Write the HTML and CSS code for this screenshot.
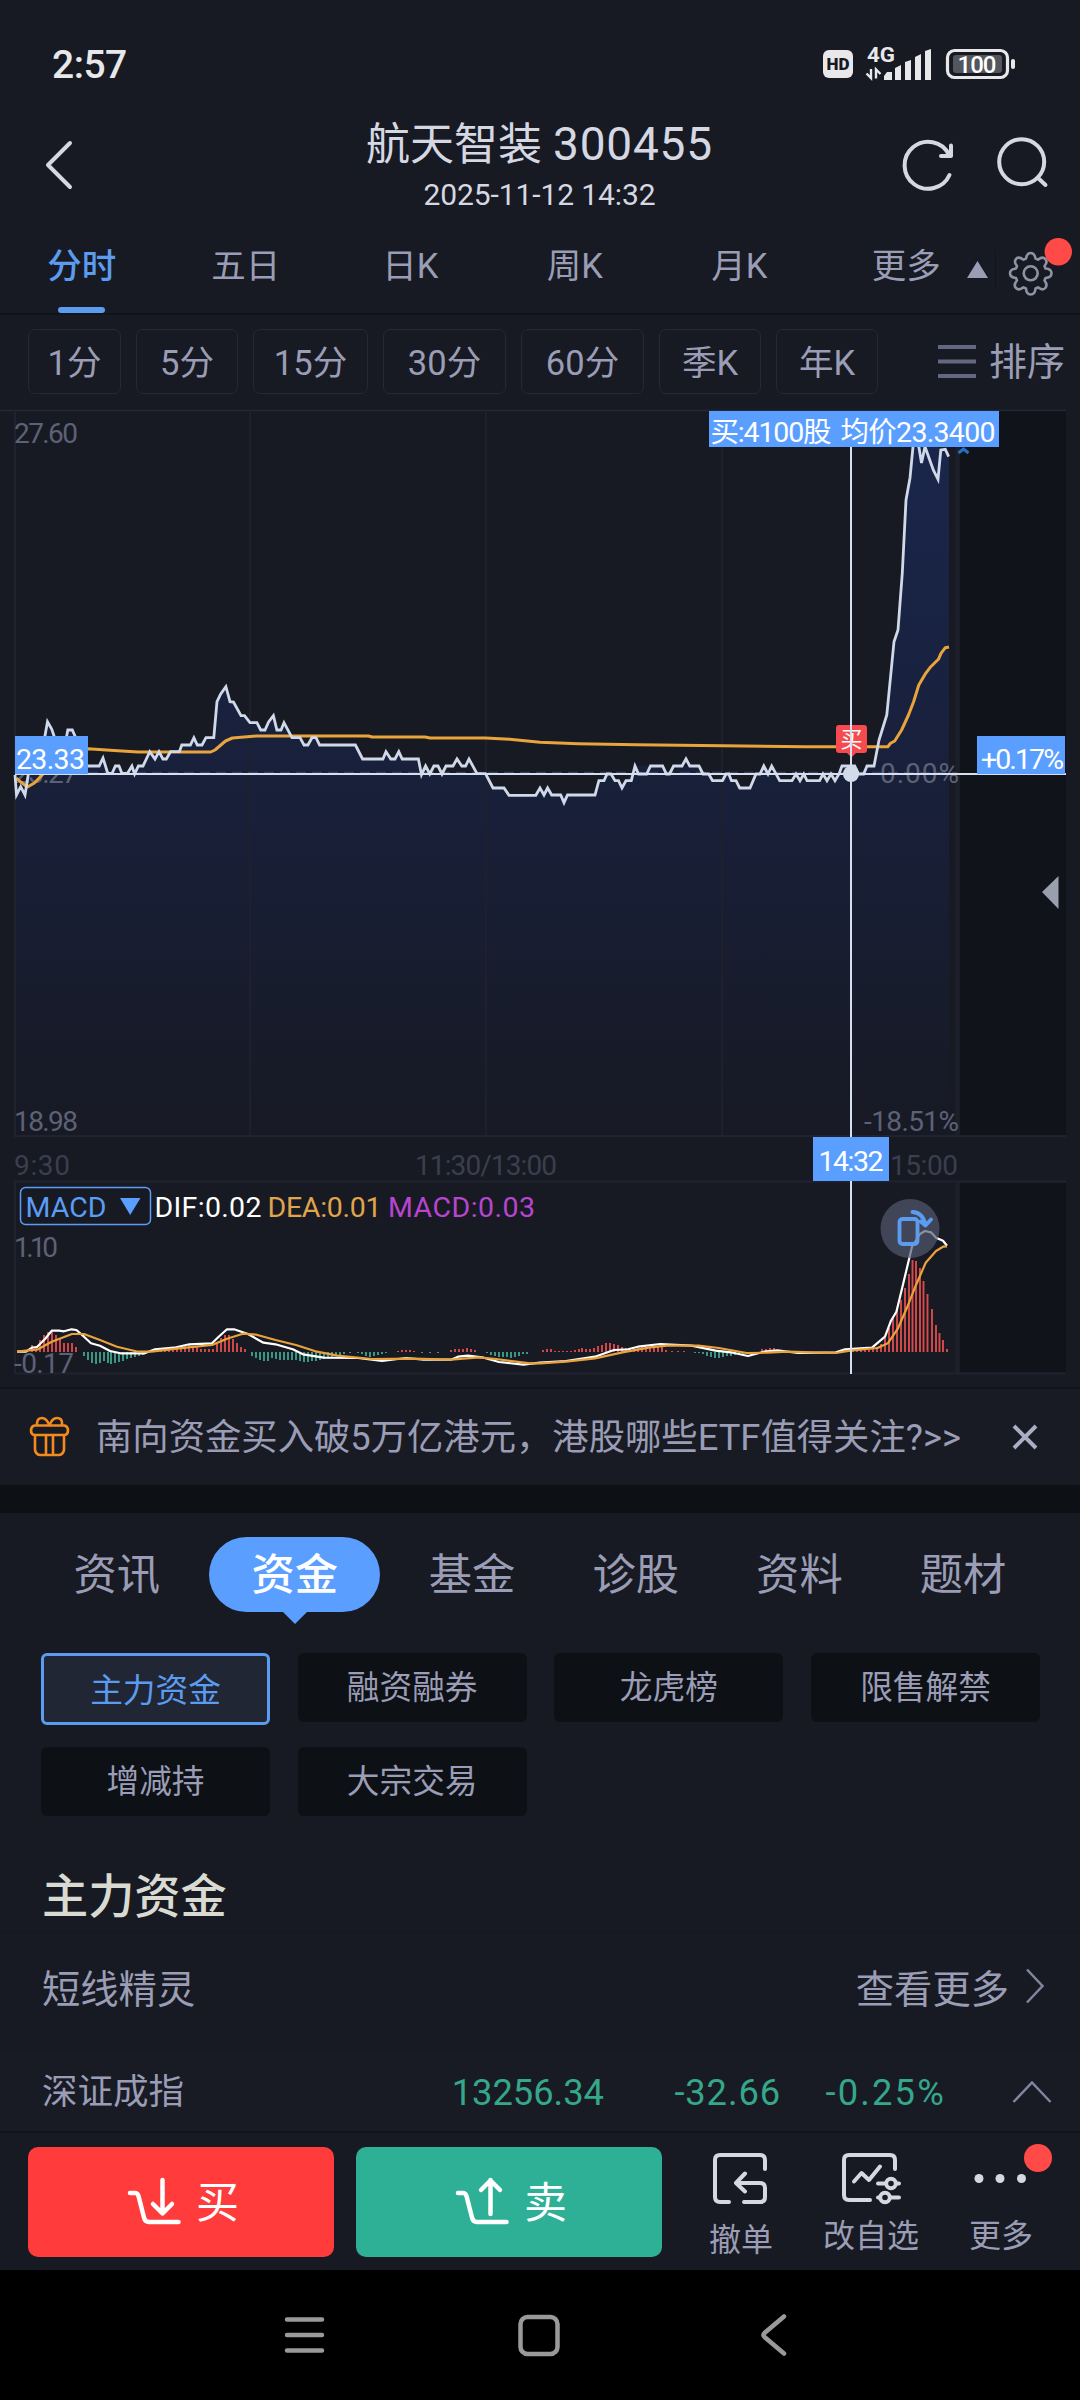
FILE: index.html
```html
<!DOCTYPE html>
<html lang="zh-CN">
<head>
<meta charset="utf-8">
<title>航天智装 300455</title>
<link rel="stylesheet" href="styles.css">
</head>
<body>
<div class="phone">
  <div class="status">
    <span class="clock">2:57</span>
    <svg class="status-icons" viewBox="820 40 200 48">
      <rect x="823" y="50" width="30" height="28" rx="6" fill="#e8e8ea"/>
      <text x="826.5" y="70" class="hd" textLength="23" lengthAdjust="spacingAndGlyphs">HD</text>
      <text x="867" y="62" class="net" textLength="28" lengthAdjust="spacingAndGlyphs">4G</text>
      <path d="M871 69v9l-4.500-4.500M876 78.500V69.500l4.500 4.500" fill="none" stroke="#e8e8ea" stroke-width="2.400"/>
      <path d="M884 80v-4l3-4h5v8zM895 80V68l6-3v15zM905 80V62l6-2v20zM915 80V57l6-3v26zM925 80V51l6-2v31z" fill="#e8e8ea"/>
      <rect x="947.500" y="50.500" width="60" height="27" rx="7" fill="none" stroke="#e8e8ea" stroke-width="3.200"/>
      <rect x="953" y="55" width="49" height="18" rx="3" fill="#53565d"/>
      <rect x="1011" y="59" width="4" height="10" rx="2" fill="#e8e8ea"/>
      <text x="957.500" y="73" class="batt" textLength="39">100</text>
    </svg>
  </div>

  <header class="header">
    <svg class="back" viewBox="40 135 40 60"><path d="M71 143L49 165L71 187"/></svg>
    <div class="title">
      <h1>航天智装 <b>300455</b></h1>
      <p>2025-11-12 14:32</p>
    </div>
    <svg class="header-icons" viewBox="895 130 160 70">
      <path d="M949.500 175A23.500 23.500 0 1 1 949 154.500M951 145.500V156H941"/>
      <circle cx="1021.700" cy="161.700" r="22.500"/><path d="M1037.500 177.500L1045.500 185"/>
    </svg>
  </header>

  <nav class="periods">
    <span class="on">分时</span><span>五日</span><span>日K</span><span>周K</span><span>月K</span><span class="more">更多</span>
    <svg class="gear" viewBox="960 230 120 70">
      <path d="M967 278L977.500 261L988 278Z" fill="#9a9db5"/>
      <path d="M995.500 250v38" stroke="#12141a" stroke-width="1"/>
      <g fill="none" stroke="#8d92a4" stroke-width="2.600" stroke-linejoin="round">
        <path d="M1026 258.500Q1027 253 1030.700 253T1035.500 258.500L1038 259.700Q1042.500 256 1045.300 259T1044.500 266L1045.500 268.500Q1051.500 269 1051.500 273.300T1045.500 278L1044.500 280.500Q1048 285 1045.300 288T1038 287.300L1035.500 288.500Q1035 294.500 1030.700 294.500T1026 288.500L1023.500 287.300Q1019 291 1016 288T1017 280.500L1016 278Q1010 277.500 1010 273.300T1016 268.500L1017 266Q1013.500 262 1016 259T1023.500 259.700Z"/>
        <circle cx="1030.700" cy="273.300" r="7"/>
      </g>
      <circle cx="1058.300" cy="251.700" r="13.700" fill="#ff4a48"/>
    </svg>
  </nav>

  <div class="minutes">
    <span class="chip c1">1分</span><span class="chip c2">5分</span><span class="chip c3">15分</span><span class="chip c4">30分</span><span class="chip c4">60分</span><span class="chip c2">季K</span><span class="chip c2">年K</span>
    <span class="sort"><svg viewBox="0 0 38 34"><path d="M0 3h38M0 17.500h38M0 32h38" stroke="#63677f" stroke-width="4"/></svg>排序</span>
  </div>

  <svg class="chart" viewBox="0 405 1080 982">
    <defs>
      <linearGradient id="area" gradientUnits="userSpaceOnUse" x1="0" y1="430" x2="0" y2="1135">
        <stop offset="0" stop-color="#1a264c"/><stop offset=".55" stop-color="#181f38"/><stop offset="1" stop-color="#171a24"/>
      </linearGradient>
    </defs>
    <rect x="960" y="411" width="106" height="724" fill="#10131a"/>
    <rect x="960" y="1183" width="106" height="189" fill="#10131a"/>
    <path fill="url(#area)" d="M15 1135V775L16.500 795L20.700 787L25 795L29 770L44.800 737L47.500 722L51.700 729L54.400 737L60 752L66.500 737L67.800 730H72.300L75.400 737L84 766H99.200L103 758L107.800 774H112L115.400 766H119L122 774H127.400L131.900 766L134.600 774L138.400 766H143L149.800 752L155 759L159 752L162.900 759H166.300L170.500 752H179.400L181.800 745H190.400L193.900 738L197.300 745H202L206 738H213.800L217 702L220.700 694L225.900 687L230 702H233.500L241 716H244.500L250 723H256.900L260.700 730H265L268.600 722L273.400 716L276.900 730H281L284 723L292 738H300L304 745H307.900L312 738H316L319.600 745H355.400L362.600 759H382.900L386 752L390.800 759H395L398.800 752L402.200 759H418.400L421.500 774L477 774H485.500L493 788H504L509 795H535.800L540 788L544 795L547.600 788L551.700 795H595L598.900 781L607 774L622 788L635 766L650 766H662L669 774L682 766L699 766L712 781L728 774L739 788H750L764 766L780 781H835L842 766H854L858 774L867 766H874L879 740L886.800 715L894 642L898 630L902.300 573L906 500L910 478L913 447L919 430L940 449L949 457V1135Z"/>
    <g fill="none" stroke="#20232f" stroke-width="2">
      <path d="M0 410.500H1066" stroke="#242734" stroke-width="1.500"/>
      <path d="M15 412V1136H1066M15 1374V1181.500H1066M15 1373.500H1066"/>
      <path d="M250 412V1135M486 412V1135M722 412V1135" stroke="#1e212d"/>
      <path d="M957.500 412V1136M957.500 1182V1373" stroke-width="4" stroke="#1d202a"/>
    </g>
    <path d="M88 772.500H957" stroke="#33405c" stroke-width="1.500" stroke-dasharray="10 6" fill="none"/>

    <g class="axis">
      <text x="14" y="443" textLength="64">27.60</text>
      <text x="14" y="783" textLength="64">23.27</text>
      <text x="14" y="1131" textLength="64">18.98</text>
      <text x="880" y="783" textLength="79">0.00%</text>
      <text x="864" y="1131" textLength="95">-18.51%</text>
      <text x="14" y="1257" textLength="44">1.10</text>
      <text x="14" y="1373" textLength="60">-0.17</text>
    </g>
    <g class="axis dim">
      <text x="14" y="1175" textLength="56">9:30</text>
      <text x="415" y="1175" textLength="142">11:30/13:00</text>
      <text x="890" y="1175" textLength="68">15:00</text>
    </g>

    <path class="avg" d="M16.500 778L20.700 782L27.500 787L34.400 783L43 774L55 750L88 748.700L110 750.300L138 752H210.700L215 750L225.500 741L232.400 738L256.500 736H368.500L372 737H425L430 738H485.500L509.600 739.300L540 742.300L578 743.700L637 744.700L722.500 745.700L805 746.700H887.800L890.500 743.300L894.700 741L901.600 730L908.500 715L913.600 701.700L918.800 685L925.700 673.300L930.800 666.700L938.400 659.300L941 653.300L945.300 647.700L949 647"/>
    <path class="price" d="M15 775L16.500 795L20.700 786.700L25 795L29 770L44.800 736.700L47.500 721.700L51.700 729L54.400 737L60 752L66.500 737L67.800 730H72.300L75.400 737L84 766H99.200L103 758L107.800 773.500H112L115.400 766H119L122 773.500H127.400L131.900 766L134.600 774L138.400 766H143L149.800 751.700L155 759L159 751.700L162.900 759H166.300L170.500 751.700H179.400L181.800 745H190.400L193.900 737.700L197.300 745H202L206 737.700H213.800L217 701.700L220.700 694L225.900 686.700L230 701.700L233.500 702L241 715.700H244.500L250 722.700H256.900L260.700 730H265L268.600 722L273.400 715.700L276.900 730H281L284 722.700L292 737.700H300L304 745H307.900L312 737.700H316L319.600 745H355.400L362.600 759H382.900L386 751.700L390.800 759H395L398.800 751.700L402.200 759H418.400L421.500 774.700L425.600 766L429.800 774L433.900 766H438L442 774L446 766H453L457 759L461.800 766H465.600L469 759L477 773.700H485.500L493 788H504L509 795.300H535.800L540 788L544 795L547.600 788L551.700 795H560.700L564 802.700L567.500 795H595L598.900 780.700H604L607 774H611L615 780.700H618.500L622 788L626 780.700H631.300L635 766L638.500 774H646.700L650.500 766H662.600L666.400 774H669.500L673.600 766H682L686 759L689.800 766H699L703 774H708.700L712.500 780.700H722.500L726 774H728.700L731.500 780.700H736L739.700 788H750L756 774H760L763.800 766L768 774L771.700 766L779.700 780.700H792L796 774L800 780.700L803.800 774L807 780.700H819.600L823 774L827 780.700L831 774L835 780.700L839 774L842 766H854.700L858.500 774H863.700L867 766H874L879 740L886.800 715L894 641.700L898 630L902.300 573L906 500L910 478L913 446.700L914 433L919 447.700L921.500 463L925 446.700L933.300 470L938 479.300L940.800 450L945.300 449.300L948.700 456.700"/>
    <path d="M958.500 453L963.500 449L968.500 453" fill="none" stroke="#2272c8" stroke-width="3"/>

    <g fill="none" stroke-width="1.900">
      <path stroke="#d84b4a" d="M32 1352v-7M36 1352v-6M40 1352v-12M44 1352v-17M48 1352v-20M52 1352v-20M56 1352v-17M60 1352v-14M64 1352v-9M68 1352v-9M72 1352v-9M76 1352v-5M153 1352v-1M157 1352v-2M161 1352v-2M165 1352v-3M169 1352v-3M173 1352v-4M177 1352v-5M181 1352v-6M185 1352v-7M189 1352v-7M193 1352v-6M197 1352v-5M201 1352v-3M205 1352v-3M209 1352v-3M213 1352v-3M217 1352v-9M221 1352v-14M225 1352v-17M229 1352v-17M233 1352v-13M237 1352v-9M241 1352v-5M245 1352v-3M398 1352v-1M402 1352v-2M406 1352v-2M410 1352v-2M414 1352v-1M451 1352v-2M455 1352v-3M459 1352v-3M463 1352v-3M467 1352v-4M471 1352v-3M475 1352v-2M543 1352v-2M547 1352v-3M551 1352v-3M555 1352v-1M559 1352v-1M563 1352v-1M567 1352v-1M571 1352v-1M575 1352v-2M579 1352v-3M582 1352v-4M586 1352v-3M590 1352v-3M594 1352v-4M598 1352v-6M602 1352v-7M606 1352v-9M610 1352v-9M614 1352v-8M618 1352v-7M622 1352v-5M626 1352v-4M630 1352v-3M634 1352v-3M638 1352v-4M642 1352v-5M646 1352v-5M650 1352v-6M654 1352v-6M658 1352v-6M662 1352v-5M666 1352v-2M672 1352v-1M678 1352v-1M684 1352v-1M762 1352v-3M766 1352v-3M770 1352v-4M774 1352v-4M778 1352v-2M845 1352v-3M849 1352v-3M853 1352v-2M857 1352v-2M861 1352v-2M865 1352v-2M869 1352v-2M873 1352v-3M877 1352v-5M881 1352v-8M885 1352v-14M889 1352v-24M893 1352v-35M897 1352v-43M901 1352v-52M905 1352v-64M909 1352v-78M912.500 1352v-92M916 1352v-91M920 1352v-84M923.500 1352v-71M927.500 1352v-58M932 1352v-43M936 1352v-27M939.500 1352v-19M943 1352v-12M947 1352v-3"/>
      <path stroke="#3c9d87" d="M84 1352v4M88 1352v8M92 1352v11M96 1352v12M100 1352v11M104 1352v9M108 1352v11M111 1352v12M115 1352v11M119 1352v10M123 1352v9M127 1352v7M131 1352v6M135 1352v5M139 1352v4M143 1352v3M252 1352v4M256 1352v6M260 1352v8M264 1352v9M268 1352v9M272 1352v6M276 1352v7M280 1352v8M284 1352v8M288 1352v8M292 1352v8M296 1352v8M300 1352v9M304 1352v10M308 1352v10M312 1352v9M316 1352v9M320 1352v8M324 1352v7M328 1352v6M332 1352v5M336 1352v4M340 1352v3M344 1352v2M350 1352v1M358 1352v1M362 1352v2M366 1352v4M370 1352v5M374 1352v4M378 1352v3M382 1352v2M386 1352v1M422 1352v1M430 1352v1M438 1352v1M487 1352v1M491 1352v3M495 1352v4M499 1352v5M503 1352v5M507 1352v5M511 1352v6M515 1352v5M519 1352v4M523 1352v2M527 1352v2M695 1352v1M699 1352v1M703 1352v2M707 1352v4M711 1352v5M715 1352v6M719 1352v6M723 1352v5M727 1352v4M731 1352v4M735 1352v3M739 1352v3M743 1352v3M747 1352v2M751 1352v1"/>
    </g>
    <path class="macd" stroke="#fff" d="M17 1351.700H26L32 1347.700L37 1347L45 1339L51.700 1330.700H59L64 1331.300L71.600 1329.300L76.400 1330L84 1336.700L91 1343.300L100 1345.700L110 1351L120.500 1353.300H144.600L155 1349.300L174 1347.700L189.400 1344.300L212 1343.300L218.700 1336.700L227 1329.300H234L248 1334L263.400 1342.700L275.500 1344.300L292.700 1349.300L303 1354.300L323.700 1357.700L358 1358L382 1361L406 1358L423.600 1359.700H451L458 1356.700L468 1355.700L482 1357.300L499 1362L523.400 1364.700L540 1362.700L566 1361L595 1356.700L614 1350L628 1349.300L638 1346.700L660.500 1344L691.500 1345.700L715.600 1350.700L733 1352.700L748 1356L764 1351.700L777.600 1350.300L798 1353L836 1352.300L845 1349.300L872 1347.700L885 1336.700L891 1320.700L896.400 1311.700L903.300 1283.300L912 1246.700L920 1234L925 1231L931 1232.300L936 1237.700L943 1240.700L947 1245.700"/>
    <path class="macd" stroke="#e9a23c" d="M17 1351.700L38 1349.300L51.700 1341.700L72 1334H84L100 1340L117 1346.700L138 1351.700H151.500L179 1348.300L212 1345L227 1338.700L243 1333.700L256.500 1334.700L275.500 1340L296 1345L317 1351.700L337.500 1355.700L372 1359L413 1358.700L451 1359.700L478.700 1357.300L496 1359L530 1363.300H540L566 1361.700L595 1358.300L622.600 1352.300L650 1347.300L667 1345.700H698.400L719 1348L746.600 1353L767 1352.700L788 1351.700L836 1353L850 1350.700L877.500 1348L887.800 1343.300L898 1328.300L906.700 1308.300L915.300 1286.700L925.700 1262.700L936 1251L943 1246.700L947 1246.300"/>

    <rect x="20.500" y="1187.500" width="130" height="37" rx="5" fill="none" stroke="#5b9cf5" stroke-width="1.500"/>
    <path d="M120 1198H140.500L130.200 1215Z" fill="#5a9eff"/>
    <g class="legend">
      <text x="25.500" y="1216.500" textLength="81" fill="#5b9cf5">MACD</text>
      <text x="154.500" y="1216.500" textLength="107" fill="#fff">DIF:0.02</text>
      <text x="267.500" y="1216.500" textLength="114" fill="#e0a44a">DEA:0.01</text>
      <text x="388" y="1216.500" textLength="147" fill="#b845cf">MACD:0.03</text>
    </g>

    <rect x="836" y="725" width="31" height="28" rx="3" fill="#f64b4e"/>
    <path d="M846 752L851.500 757.500L857 752Z" fill="#f64b4e"/>
    <text x="840.500" y="747" class="mark">买</text>
    <path d="M15 774H1066M851 447V1138M851 1181V1374" stroke="#d6dff0" stroke-width="2" fill="none"/>
    <circle cx="851" cy="774" r="8" fill="#d2dbea"/>
    <g fill="#5a9eff">
      <rect x="15" y="736" width="73" height="38"/>
      <rect x="709" y="411" width="290" height="36"/>
      <rect x="977" y="736" width="88" height="38"/>
      <rect x="813" y="1137" width="76" height="44"/>
    </g>
    <g class="flag">
      <text x="16" y="769" textLength="69">23.33</text>
      <text x="710.500" y="442" textLength="121">买:4100股</text>
      <text x="840.500" y="442" textLength="155">均价23.3400</text>
      <text x="981" y="769" textLength="83">+0.17%</text>
      <text x="818.500" y="1171" textLength="65">14:32</text>
    </g>
    <circle cx="910" cy="1228.600" r="29.500" fill="#555a72" fill-opacity=".68"/>
    <g fill="none" stroke="#5b9cf0" stroke-width="3.800" stroke-linecap="round" stroke-linejoin="round">
      <rect x="899.500" y="1219" width="18" height="25" rx="3"/>
      <path d="M912.500 1212Q923 1212.500 925.500 1225M920.500 1221.500L925.500 1225.500L931 1219.500"/>
    </g>
    <path d="M1042 892L1058.500 876V909Z" fill="#9a9fae"/>
  </svg>

  <div class="notice">
    <svg class="gift" viewBox="28 1414 44 44"><path d="M37 1425.500V1423Q37.500 1418 42 1418T49.500 1425.500Q52 1418 57 1418T62 1423V1425.500M34.500 1425.500H64.500Q68 1426.500 68 1430.500T64.500 1435H34.500Q31 1434.500 31 1430.500T34.500 1425.500ZM35 1435V1449.500Q35.500 1454.500 40 1455H59Q63.500 1454.500 64 1449.500V1435M46 1436V1454M53 1436V1454"/></svg>
    <p>南向资金买入破5万亿港元，港股哪些ETF值得关注?&gt;&gt;</p>
    <svg class="close" viewBox="0 0 26 26"><path d="M2 2L24 24M24 2L2 24"/></svg>
  </div>
  <div class="band"></div>

  <nav class="sections">
    <span>资讯</span><span class="on">资金</span><span>基金</span><span>诊股</span><span>资料</span><span>题材</span>
  </nav>
  <div class="topics">
    <span class="on">主力资金</span><span>融资融券</span><span>龙虎榜</span><span>限售解禁</span><span>增减持</span><span>大宗交易</span>
  </div>
  <h2>主力资金</h2>
  <div class="row"><span>短线精灵</span><span class="link">查看更多<svg viewBox="0 0 20 36"><path d="M2 1.500L17.500 18L2 34.500"/></svg></span></div>
  <div class="index">
    <span class="name">深证成指</span><b class="v1">13256.34</b><b class="v2">-32.66</b><b class="v3">-0.25%</b>
    <svg viewBox="0 0 40 24"><path d="M1.500 22L20 2.500L38.500 22"/></svg>
  </div>

  <footer class="trade">
    <div class="btn buy"><svg viewBox="0 0 56 50"><path d="M3 17H8Q10.500 17 11.500 20L17 41.500Q18 46 22 46H51.500M35.500 4V37M26 28L35.500 37.500L45 28"/></svg><span>买</span></div>
    <div class="btn sell"><svg viewBox="0 0 56 50"><path d="M3 17H8Q10.500 17 11.500 20L17 41.500Q18 46 22 46H51.500M35.500 38V4M26 14L35.500 4.500L45 14"/></svg><span>卖</span></div>
    <div class="tool t1"><svg viewBox="712 2150 60 56"><path d="M766 2169V2160Q766 2155 761 2155H721Q716 2155 716 2160V2197Q716 2202 721 2202H730M745 2202H761Q766 2202 766 2197V2188Q766 2183 761 2183H737M746 2173.500L737 2183L746 2191.500"/></svg><span>撤单</span></div>
    <div class="tool t2"><svg viewBox="840 2150 62 56"><path d="M895 2169V2160Q895 2155 890 2155H849Q844 2155 844 2160V2195Q844 2200 849 2200H870M854 2181.500L861.500 2173L869 2180L880 2166.500M878 2183.500H884M897 2183.500H899M878 2197.500H880M891 2197.500H899"/><circle cx="891" cy="2183.500" r="4.800"/><circle cx="885" cy="2197.500" r="4.800"/></svg><span>改自选</span></div>
    <div class="tool t3"><svg viewBox="970 2142 84 64"><g class="dots"><circle cx="979" cy="2178.500" r="4.500"/><circle cx="1000" cy="2178.500" r="4.500"/><circle cx="1021.500" cy="2178.500" r="4.500"/></g><circle class="dot" cx="1038" cy="2158" r="14"/></svg><span>更多</span></div>
  </footer>

  <div class="system">
    <svg viewBox="270 2300 530 70"><path d="M287 2319.600H322M287 2335H322M287 2350.500H322"/><rect x="520.500" y="2317" width="37" height="37" rx="7"/><path d="M784 2316.500L764.500 2333Q762.500 2335 764.500 2337L784 2353.500"/></svg>
  </div>
</div>
</body>
</html>
```
FILE: styles.css
```css
* { box-sizing: border-box; margin: 0; padding: 0; }
body { background: #171a22; }
.phone {
  width: 1080px; height: 2400px; overflow: hidden;
  display: flex; flex-direction: column;
  background: #171a22; color: #9a9db5;
  font-family: Roboto, "Noto Sans CJK SC", sans-serif;
}
svg { display: block; flex: none; }
b { font-weight: 400; }

.status { height: 110px; padding: 8px 60px 0 52px; display: flex; justify-content: space-between; align-items: flex-start; }
.clock { font-size: 39px; font-weight: 500; line-height: 46px; color: #e8e8ea; padding-top: 34px; letter-spacing: -.5px; }
.status-icons { width: 200px; height: 48px; margin-top: 32px; }
.hd { font-size: 17px; font-weight: 900; fill: #171a22; }
.net { font-size: 21px; font-weight: 700; fill: #e8e8ea; }
.batt { font-size: 24px; font-weight: 500; fill: #fff; }

.header { height: 115px; display: flex; padding: 0 25px 0 39px; }
.back { width: 40px; height: 60px; margin-top: 25px; }
.back path { fill: none; stroke: #d5d8e3; stroke-width: 4; stroke-linecap: round; stroke-linejoin: round; }
.title { flex: 1; padding-left: 105px; text-align: center; color: #d5d8e3; }
.title h1 { font-size: 44px; font-weight: 400; line-height: 64px; height: 66px; padding-top: 2px; white-space: nowrap; }
.title h1 b { font-size: 46px; letter-spacing: .8px; }
.title p { font-size: 30px; line-height: 36px; padding-top: 1px; letter-spacing: -.1px; }
.header-icons { width: 160px; height: 70px; margin-top: 20px; }
.header-icons * { fill: none; stroke: #d5d8e3; stroke-width: 4; stroke-linecap: round; stroke-linejoin: round; }

.periods { height: 90px; display: flex; border-bottom: 2px solid #101319; font-size: 34.500px; line-height: 82px; }
.periods span { width: 164.500px; text-align: center; flex: none; }
.periods .on { width: 163.500px; color: #5b9cf0; font-weight: 500; display: flex; flex-direction: column; align-items: center; }
.periods .on::after { content: ""; width: 47px; height: 6px; border-radius: 3px; background: #5b9cf0; }
.periods .more { width: 138.500px; padding-left: 31px; }
.gear { width: 120px; height: 70px; margin-top: 5px; }

.minutes { height: 90px; padding: 14px 15px 11px 28px; display: flex; gap: 15px; font-size: 34.500px; }
.chip { height: 65px; line-height: 66px; border: 1px solid #252836; border-radius: 7px; text-align: center; flex: none; }
.c1 { width: 93px; } .c2 { width: 102px; } .c3 { width: 115px; } .c4 { width: 123px; }
.sort { margin-left: auto; display: flex; align-items: center; gap: 13px; font-size: 38px; line-height: 66px; height: 65px; white-space: nowrap; }
.sort svg { width: 38px; height: 34px; margin-top: -2px; }

.chart { width: 1080px; height: 982px; }
.axis { font-size: 28px; fill: #5d6176; }
.dim { fill: #3b3e4f; }
.legend, .flag { font-size: 28.500px; }
.flag { fill: #fff; }
.mark { font-size: 22px; fill: #fff; }
.avg { fill: none; stroke: #e9a43c; stroke-width: 3; stroke-linejoin: round; }
.price { fill: none; stroke: #d0d9e9; stroke-width: 2.800; stroke-linejoin: miter; }
.macd { fill: none; stroke-width: 2.200; stroke-linejoin: round; }

.notice { height: 98px; border-top: 2px solid #101319; background: #181b24; display: flex; align-items: center; padding: 0 42px 0 28px; font-size: 36.350px; }
.gift { width: 44px; height: 44px; margin-top: -3px; }
.gift path { fill: none; stroke: #f28a1e; stroke-width: 2.600; stroke-linejoin: round; }
.notice p { padding: 0 0 6px 24px; white-space: nowrap; flex: 1; }
.close { width: 26px; height: 26px; }
.close path { stroke: #aaaec4; stroke-width: 4; }
.band { height: 28px; background: #0d1014; }

.sections { height: 140px; padding: 24px 35px 0 35px; display: flex; font-size: 43.300px; line-height: 77px; }
.sections span { width: 163.700px; text-align: center; flex: none; }
.sections .on { width: 171px; margin: 0 10px 0 10.500px; height: 75px; border-radius: 38px; background: #5a9eff; color: #fff; font-weight: 500; display: flex; flex-direction: column; align-items: center; }
.sections .on::after { content: ""; border: 12px solid transparent; border-bottom: 0; border-top: 12px solid #5a9eff; margin-top: -2px; }
.topics { height: 187px; padding: 0 40px 0 41px; display: grid; grid-template-columns: repeat(4, 229px); grid-template-rows: 69px 69px; column-gap: 27.700px; row-gap: 25px; font-size: 32.700px; line-height: 71px; }
.topics span { background: #0d1015; border-radius: 6px; text-align: center; }
.topics .on { height: 72px; border: 3px solid #5b9cf0; background: #212635; color: #5b9cf0; line-height: 70px; }

h2 { height: 93px; border-bottom: 1px solid #14171e; padding: 14px 42px 0; font-size: 46.200px; line-height: 86px; font-weight: 500; color: #d9dad2; }
.row { height: 120px; padding: 0 35px 14px 42px; display: flex; justify-content: space-between; align-items: center; font-size: 38.300px; }
.link { display: flex; align-items: center; gap: 16px; }
.link svg { width: 20px; height: 36px; }
.link path, .index path { fill: none; stroke: #82859d; stroke-width: 2.500; }
.index { height: 80px; border-bottom: 2px solid #101319; background: #181b24; display: flex; align-items: center; padding: 0 28px 0 42px; font-size: 35.500px; }
.index b { font-size: 36.300px; color: #35a78b; text-align: right; }
.index .name { width: 200px; padding-bottom: 7px; }
.index .v1 { width: 362px; }
.index .v2 { width: 177px; letter-spacing: .9px; }
.index .v3 { width: 165px; letter-spacing: 2.200px; }
.index svg { width: 40px; height: 24px; margin-left: auto; }

.trade { height: 137px; padding: 14px 0 0 28px; display: flex; }
.btn { width: 306px; height: 110px; margin-right: 22px; padding-left: 4px; border-radius: 10px; color: #fff; font-size: 43px; display: flex; align-items: center; justify-content: center; gap: 13px; flex: none; }
.btn span { padding-bottom: 7px; }
.btn svg { width: 56px; height: 50px; margin-top: -3px; }
.btn path { fill: none; stroke: #fff; stroke-width: 4.500; stroke-linecap: round; stroke-linejoin: round; }
.buy { background: #ff3b3b; } .sell { background: #2db095; }
.tool { display: flex; flex-direction: column; align-items: center; font-size: 32px; line-height: 42px; flex: none; white-space: nowrap; }
.tool svg * { fill: none; stroke: #d5d8e3; stroke-width: 4; stroke-linecap: round; stroke-linejoin: round; }
.tool svg .dots, .tool svg .dots * { fill: #d5d8e3; stroke: none; }
.tool svg .dot { fill: #ff4a48; stroke: none; }
.t1 { width: 70px; margin-left: 22px; }
.t1 svg { width: 60px; height: 56px; margin: 3px 0 13px; }
.t2 { width: 110px; margin-left: 40px; }
.t2 svg { width: 62px; height: 56px; margin: 3px 0 9px; }
.t3 { width: 84px; margin-left: 44px; align-items: flex-start; }
.t3 svg { width: 84px; height: 64px; margin: -5px 0 9px; }
.t3 span { margin-left: -1px; }

.system { height: 130px; background: #000; padding: 30px 0 0 270px; }
.system svg { width: 530px; height: 70px; fill: none; stroke: #999; stroke-width: 4.500; stroke-linecap: round; }
```
